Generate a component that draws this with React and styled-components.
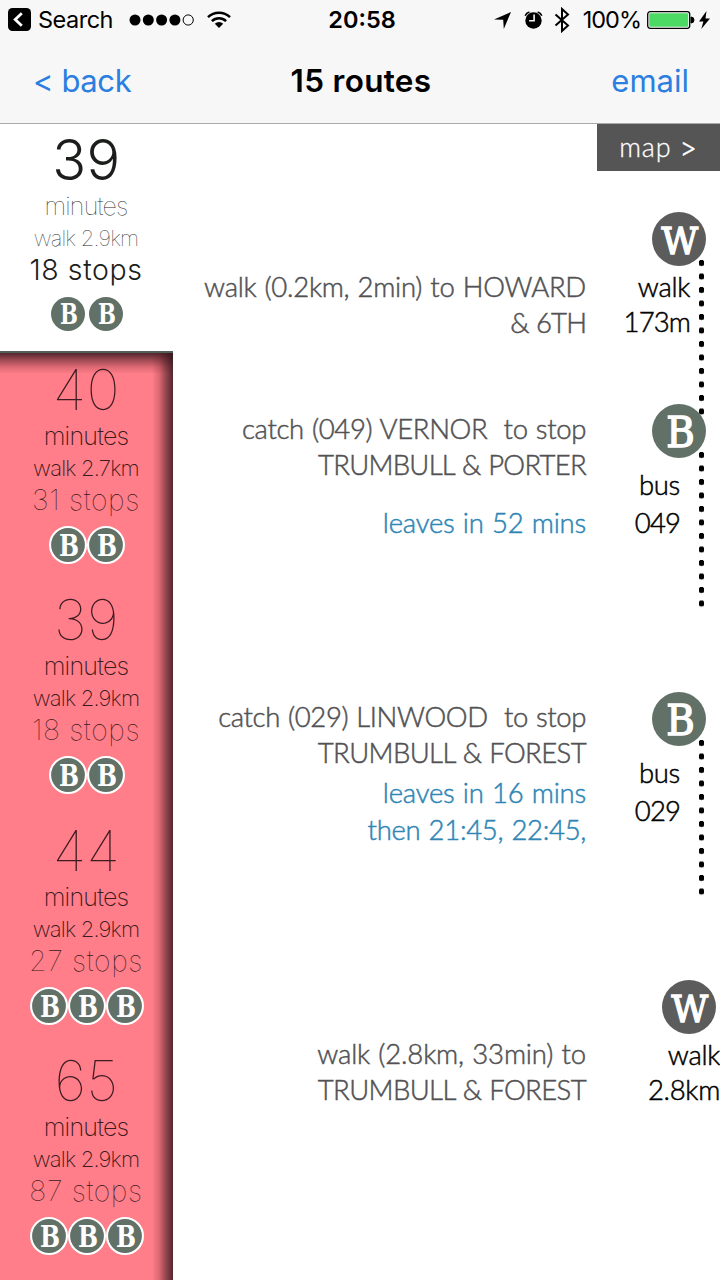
import React from "react";
import styled, { createGlobalStyle } from "styled-components";

const GlobalStyle = createGlobalStyle`
  * {
    box-sizing: border-box;
  }
  body {
    margin: 0;
    background: #ffffff;
    font-family: Inter, "Liberation Sans", sans-serif;
    overflow: hidden;
  }
`;

const Screen = styled.div`
  display: flex;
  flex-direction: column;
  width: 720px;
  height: 1280px;
  overflow: hidden;
`;

const Header = styled.header`
  height: 124px;
  background: #f7f7f7;
  border-bottom: 1px solid #a9abab;
`;

const StatusBar = styled.div`
  display: grid;
  grid-template-columns: 1fr auto 1fr;
  align-items: center;
  height: 39px;
  padding: 0 9px 0 8px;
  font-size: 23.5px;
  color: #000000;
`;

const StatusSide = styled.div`
  display: flex;
  align-items: center;
  justify-content: ${({ $end }) => ($end ? "flex-end" : "flex-start")};
`;

const Search = styled.span`
  margin: 0 16px 0 7px;
  letter-spacing: -0.5px;
`;

const Clock = styled.span`
  padding-left: 5px;
  font-weight: 600;
  letter-spacing: 0;
`;

const Percent = styled.span`
  margin: 0 6px 0 12px;
  letter-spacing: -1px;
`;

const NavBar = styled.nav`
  display: grid;
  grid-template-columns: 1fr auto 1fr;
  align-items: center;
  height: 83px;
  padding: 0 31px 0 33px;
`;

const NavLink = styled.a`
  font-size: 31px;
  color: #2a7fe0;
  text-align: ${({ $end }) => ($end ? "right" : "left")};
  letter-spacing: ${({ $track }) => $track || 0}px;
`;

const Title = styled.h1`
  margin: 0;
  font-size: 31.5px;
  font-weight: 600;
  letter-spacing: 0.3px;
`;

const Content = styled.main`
  display: flex;
  flex: 1;
  min-height: 0;
`;

const Sidebar = styled.aside`
  width: 173px;
  flex-shrink: 0;
  display: flex;
  flex-direction: column;
`;

const RouteList = styled.div`
  flex: 1;
  background: #ff7e89;
  background-image: linear-gradient(
      to left,
      rgba(45, 20, 25, 0.82) 0,
      rgba(60, 20, 28, 0.5) 8px,
      rgba(80, 20, 30, 0.2) 14px,
      rgba(100, 20, 35, 0) 21px
    ),
    linear-gradient(
      to bottom,
      rgba(45, 20, 25, 0.82) 0,
      rgba(60, 20, 28, 0.5) 7px,
      rgba(80, 20, 30, 0.2) 14px,
      rgba(100, 20, 35, 0) 21px
    );
`;

const RouteCard = styled.div`
  display: flex;
  flex-direction: column;
  align-items: center;
  height: ${({ $active }) => ($active ? 229 : 230.4)}px;
  padding-top: ${({ $active }) => ($active ? 6 : 7)}px;
  flex-shrink: 0;
  color: ${({ $active }) => ($active ? "#1c1e1c" : "#3c1a20")};
  border-bottom: ${({ $active }) => ($active ? "2px solid #53605a" : "none")};
  font-weight: 100;
`;

const Minutes = styled.div`
  height: 60px;
  line-height: 60px;
  font-size: 56px;
  letter-spacing: 0.5px;
  font-weight: ${({ $active }) => ($active ? 300 : 100)};
`;

const RouteLine = styled.div`
  height: ${({ $height }) => $height}px;
  line-height: ${({ $height }) => $height}px;
  font-size: ${({ $size }) => $size}px;
  letter-spacing: ${({ $track }) => $track || 0}px;
  font-weight: ${({ $weight }) => $weight || 200};
  margin-right: 1px;
  white-space: pre;
`;

const RouteBadges = styled.div`
  display: flex;
  gap: ${({ $active }) => ($active ? 4 : 0)}px;
  margin-top: ${({ $active }) => ($active ? 10 : 9)}px;
`;

const Details = styled.section`
  flex: 1;
  display: flex;
  flex-direction: column;
`;

const MapButton = styled.button`
  align-self: flex-end;
  width: 123px;
  height: 47px;
  padding: 0 0 3px;
  margin-bottom: 41px;
  border: none;
  background: #555555;
  color: #ffffff;
  font-family: Lato, sans-serif;
  font-size: 27px;
  font-weight: 300;
  letter-spacing: 0.9px;
  -webkit-text-stroke: 0.3px;
`;

const Chevron = styled.span`
  font-family: Inter, sans-serif;
  font-size: 26px;
`;

const StepRow = styled.div`
  display: flex;
  justify-content: flex-end;
  height: ${({ $height }) => $height}px;
  flex-shrink: 0;
  font-family: Lato, sans-serif;
  font-size: 27.5px;
  font-weight: 300;
  -webkit-text-stroke: 0.5px;
`;

const StepText = styled.div`
  width: 400px;
  padding-top: ${({ $top }) => $top}px;
  line-height: 36px;
  word-spacing: 1px;
  text-align: right;
  color: #525254;
`;

const TextLine = styled.div`
  white-space: pre;
  letter-spacing: ${({ $track }) => $track || 0}px;
`;

const Departure = styled(TextLine)`
  color: #2f86b5;
  margin-top: ${({ $gap }) => $gap || 0}px;
`;

const StepSide = styled.div`
  display: grid;
  grid-template-columns: 1fr ${({ $last }) => ($last ? 0 : 6)}px;
  grid-template-rows: 54px 1fr;
  width: 134px;
  padding-right: ${({ $last }) => ($last ? 0 : 16)}px;
`;

const BadgeCell = styled.div`
  grid-area: 1 / 1 / 2 / 3;
  justify-self: end;
  margin-right: ${({ $last }) => ($last ? 4 : -2)}px;
  height: 54px;
  z-index: 1;
`;

const Rail = styled.div`
  grid-area: 1 / 2 / 3 / 3;
  width: 5px;
  margin: ${({ $top }) => $top}px 0 0 1px;
  height: ${({ $dots }) => $dots * 13.5}px;
  background: radial-gradient(circle at 2.5px 3px, #000000 2.8px, transparent 3.4px) 0 0 / 5px 13.5px
    repeat-y;
`;

const Labels = styled.div`
  grid-area: 2 / 1 / 3 / 2;
  padding: ${({ $top }) => $top}px ${({ $right }) => $right}px 0 0;
  line-height: ${({ $leading }) => $leading}px;
  text-align: right;
  color: #000000;
`;

const Label = styled.div`
  letter-spacing: ${({ $digits }) => ($digits ? -0.9 : -0.3)}px;
`;

const BadgeSvg = styled.svg`
  display: block;
  overflow: visible;
  font-family: "DejaVu Serif Condensed", "DejaVu Serif", serif;
  -webkit-text-stroke: 0;
`;

const letters = {
  B: { x: 14.2, y: 42.6, size: 43, width: 28.5, fill: "#617167" },
  W: { x: 9.5, y: 42, size: 37.5, width: 36.5, fill: "#5c5c5c" },
};

const Badge = ({ kind, size = 54, ring }) => {
  const letter = letters[kind];
  return (
    <BadgeSvg width={size} height={size} viewBox="0 0 54 54">
      <circle
        cx="27"
        cy="27"
        r={ring ? 25.5 : 27}
        fill={letter.fill}
        stroke={ring ? "#ffffff" : "none"}
        strokeWidth="3"
      />
      <text
        x={letter.x}
        y={letter.y}
        fontSize={letter.size}
        textLength={letter.width}
        lengthAdjust="spacingAndGlyphs"
        fontWeight={size < 54 ? 700 : 400}
        fill="#ffffff"
        stroke="#ffffff"
        strokeWidth={size < 54 ? 0 : 1.4}
      >
        {kind}
      </text>
    </BadgeSvg>
  );
};

const routes = [
  { minutes: 39, walk: "2.9km", stops: 18, buses: 2 },
  { minutes: 40, walk: "2.7km", stops: 31, buses: 2 },
  { minutes: 39, walk: "2.9km", stops: 18, buses: 2 },
  { minutes: 44, walk: "2.9km", stops: 27, buses: 3 },
  { minutes: 65, walk: "2.9km", stops: 87, buses: 3 },
];

const steps = [
  {
    kind: "W",
    height: 192,
    textTop: 57,
    lines: [["walk (0.2km, 2min) to HOWARD", -0.27], ["& 6TH", -0.9]],
    departures: [],
    labels: ["walk", "173m"],
    labelTop: 3,
    labelRight: 8,
    leading: 35,
    rail: { top: 48, dots: 12 },
  },
  {
    kind: "B",
    height: 288,
    textTop: 7,
    lines: [["catch (049) VERNOR  to stop", -0.34], ["TRUMBULL & PORTER", -0.72]],
    departures: [["leaves in 52 mins", -0.2, 22]],
    labels: ["bus", "049"],
    labelTop: 8,
    labelRight: 18,
    leading: 38,
    rail: { top: 48, dots: 12 },
  },
  {
    kind: "B",
    height: 288,
    textTop: 7,
    lines: [["catch (029) LINWOOD  to stop", -0.38], ["TRUMBULL & FOREST", -0.6]],
    departures: [["leaves in 16 mins", -0.2, 4], ["then 21:45, 22:45,", -0.3, 1]],
    labels: ["bus", "029"],
    labelTop: 8,
    labelRight: 18,
    leading: 38,
    rail: { top: 48, dots: 12 },
  },
  {
    kind: "W",
    height: 288,
    textTop: 56,
    lines: [["walk (2.8km, 33min) to", -0.15], ["TRUMBULL & FOREST", -0.6]],
    departures: [],
    labels: ["walk", "2.8km"],
    labelTop: 3,
    labelRight: 0,
    leading: 35,
    last: true,
  },
];

const Route = ({ route, active }) => (
  <RouteCard $active={active}>
    <Minutes $active={active}>{route.minutes}</Minutes>
    <RouteLine $height={33} $size={25} $track={-0.8} $weight={active ? 100 : 200}>
      minutes
    </RouteLine>
    <RouteLine $height={30} $size={22} $track={-0.8} $weight={active ? 100 : 200}>
      walk {route.walk}
    </RouteLine>
    <RouteLine $height={34} $size={28.5} $track={0.6} $weight={active ? 300 : 100}>
      {route.stops} stops
    </RouteLine>
    <RouteBadges $active={active}>
      {Array.from({ length: route.buses }, (_, i) => (
        <Badge key={i} kind="B" size={active ? 34 : 38} ring={!active} />
      ))}
    </RouteBadges>
  </RouteCard>
);

const Step = ({ step }) => (
  <StepRow $height={step.height}>
    <StepText $top={step.textTop}>
      {step.lines.map(([text, track]) => (
        <TextLine key={text} $track={track}>
          {text}
        </TextLine>
      ))}
      {step.departures.map(([text, track, gap]) => (
        <Departure key={text} $track={track} $gap={gap}>
          {text}
        </Departure>
      ))}
    </StepText>
    <StepSide $last={step.last}>
      <BadgeCell $last={step.last}>
        <Badge kind={step.kind} />
      </BadgeCell>
      {step.rail && <Rail $top={step.rail.top} $dots={step.rail.dots} />}
      <Labels $top={step.labelTop} $right={step.labelRight} $leading={step.leading}>
        {step.labels.map((label, i) => (
          <Label key={label} $digits={i === 1 && !step.last}>
            {label}
          </Label>
        ))}
      </Labels>
    </StepSide>
  </StepRow>
);

const BackIcon = () => (
  <svg width="23" height="23" viewBox="0 0 23 23">
    <rect width="23" height="23" rx="4.5" fill="#000" />
    <path d="M13.8 5.2 7.2 11.5l6.6 6.3" fill="none" stroke="#fff" strokeWidth="2.8" />
  </svg>
);

const SignalIcon = () => (
  <svg width="66" height="12" viewBox="0 0 66 12">
    {[6, 19.3, 32.6, 45.9].map((cx) => (
      <circle key={cx} cx={cx} cy="6" r="5.5" />
    ))}
    <circle cx="59.2" cy="6" r="5.1" fill="none" stroke="#000" />
  </svg>
);

const WifiIcon = styled(({ className }) => (
  <svg className={className} width="24" height="18" viewBox="0 0 24 18">
    <g fill="none" stroke="#000" strokeWidth="2.5">
      <path d="M1 6.2a15.6 15.6 0 0 1 22 0" />
      <path d="M4.9 10.1a10 10 0 0 1 14.2 0" />
    </g>
    <path d="M7.8 12.7a6 6 0 0 1 8.4 0L12 17z" />
  </svg>
))`
  margin-left: 12px;
`;

const StatusIcons = () => (
  <svg width="77" height="28" viewBox="0 0 77 28">
    <path d="M0 13.5 17 6l-7.2 17-.6-9.2z" />
    <circle cx="39.5" cy="14.5" r="8.2" />
    <path d="M31.2 9.8A6 6 0 0 1 35.4 6M47.8 9.8A6 6 0 0 0 43.6 6" fill="none" stroke="#000" strokeWidth="1.6" />
    <path d="M40.1 8.5v6.3h-5" fill="none" stroke="#f7f7f7" strokeWidth="1.6" />
    <path d="m61.5 8.5 12.5 11-6 5.5V3l6 5.5-12.5 11" fill="none" stroke="#000" strokeWidth="2" />
  </svg>
);

const BatteryIcon = () => (
  <svg width="64" height="20" viewBox="0 0 64 20">
    <rect x="0.7" y="1.7" width="42" height="16.6" rx="2.5" fill="#fff" stroke="#000" strokeWidth="1.3" />
    <rect x="2.2" y="3.2" width="39" height="13.6" rx="1" fill="#4cd964" />
    <path d="M44 7a3 3 0 0 1 0 6z" stroke="#000" />
    <path d="M59.5 1 52 11.4h4.4L54.3 19 63 8.6h-4.5z" />
  </svg>
);

const App = () => {
  const [active, ...others] = routes;

  return (
    <Screen>
      <GlobalStyle />
      <Header>
        <StatusBar>
          <StatusSide>
            <BackIcon />
            <Search>Search</Search>
            <SignalIcon />
            <WifiIcon />
          </StatusSide>
          <Clock>20:58</Clock>
          <StatusSide $end>
            <StatusIcons />
            <Percent>100%</Percent>
            <BatteryIcon />
          </StatusSide>
        </StatusBar>
        <NavBar>
          <NavLink $track={-0.4}>&lt; back</NavLink>
          <Title>15 routes</Title>
          <NavLink $end>email</NavLink>
        </NavBar>
      </Header>
      <Content>
        <Sidebar>
          <Route route={active} active />
          <RouteList>
            {others.map((route, i) => (
              <Route key={i} route={route} />
            ))}
          </RouteList>
        </Sidebar>
        <Details>
          <MapButton>
            map <Chevron>&gt;</Chevron>
          </MapButton>
          {steps.map((step, i) => (
            <Step key={i} step={step} />
          ))}
        </Details>
      </Content>
    </Screen>
  );
};

export default App;
